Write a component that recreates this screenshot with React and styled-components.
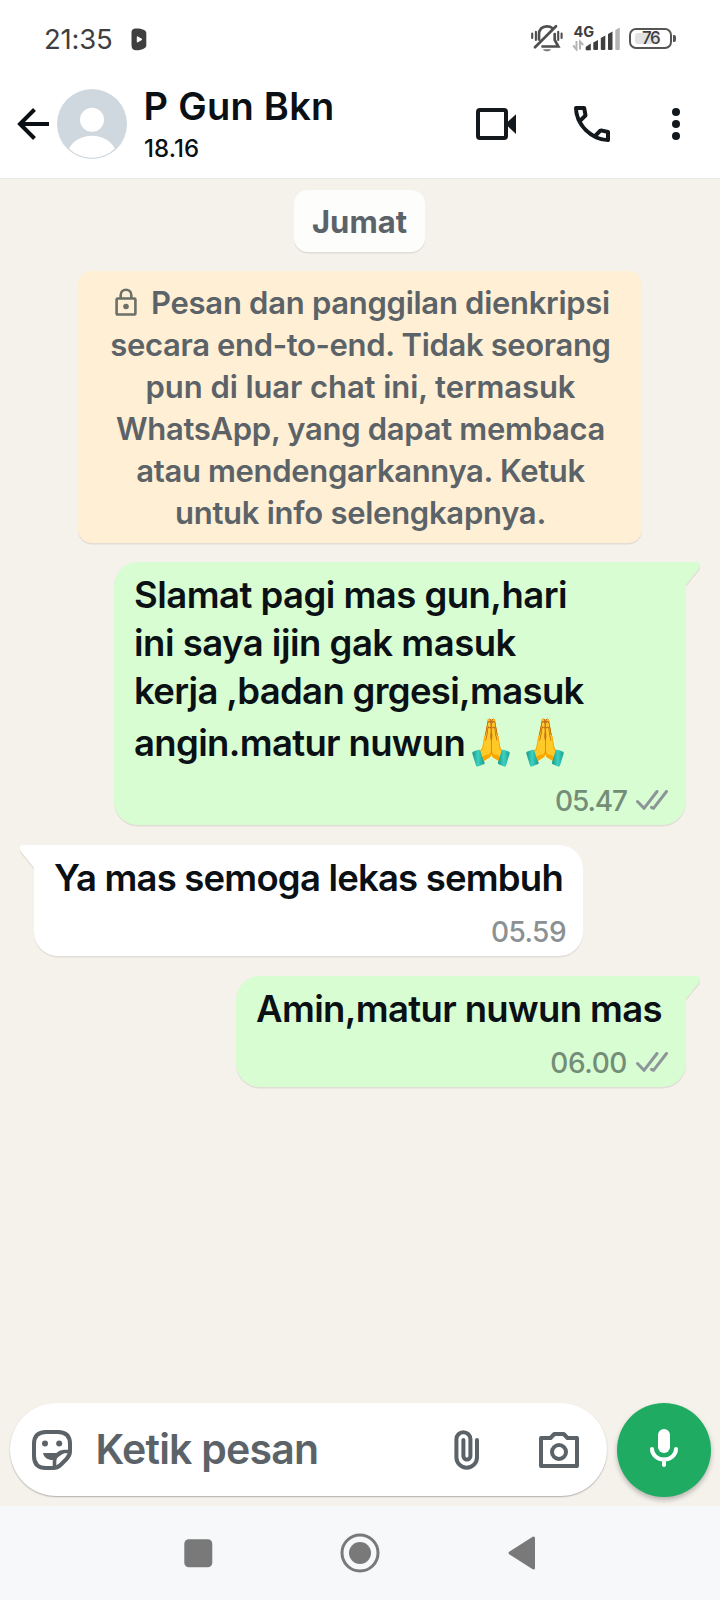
import React from "react";
import styled, { createGlobalStyle } from "styled-components";

const Global = createGlobalStyle`
  *, *::before, *::after { box-sizing: border-box; }
  body {
    margin: 0;
    background: #f5f1eb;
    font-family: Inter, "Noto Sans", sans-serif;
    color: #0a1014;
  }
  svg { display: block; flex: none; }
`;

const Screen = styled.div`
  width: 720px;
  height: 1600px;
  display: flex;
  flex-direction: column;
  overflow: hidden;
  background: #f5f1eb;
`;

const Line = styled.div`
  white-space: pre;
  letter-spacing: ${(p) => p.$ls || 0}px;
`;

/* Status bar */
const StatusBar = styled.div`
  height: 69px;
  background: #fff;
  display: flex;
  align-items: flex-start;
  padding: 24px 48px 0 44px;
  color: #3f3f3f;
`;
const Clock = styled(Line)`
  font-size: 27.5px;
  line-height: 30px;
  width: 87px;
`;
const StatusIcons = styled.div`
  margin-left: auto;
  display: flex;
  align-items: flex-start;
`;
const Signal = styled.svg`
  margin: -5px 0 0 4px;
  font-family: Inter, sans-serif;
`;
const Battery = styled.div`
  position: relative;
  width: 43px;
  height: 21px;
  margin: 4px 0 0 9px;
  border: 2px solid #555;
  border-radius: 7px;
  display: flex;
  align-items: center;
  padding: 0 4px;
  &::after {
    content: "";
    position: absolute;
    right: -6px;
    top: 5px;
    width: 3px;
    height: 7px;
    border-radius: 0 2px 2px 0;
    background: #555;
  }
`;
const Charge = styled.div`
  width: 24px;
  height: 11px;
  border-radius: 3px;
  background: #e2e2e2;
`;
const ChargeText = styled.div`
  margin-left: -17px;
  font-size: 17px;
  line-height: 17px;
  letter-spacing: -1.4px;
  font-weight: 500;
`;

/* Header */
const Header = styled.header`
  height: 110px;
  background: #fff;
  display: flex;
  align-items: center;
  padding: 0 40px 0 17px;
  border-bottom: 1px solid #e9e9e7;
`;
const Contact = styled.div`
  flex: 1;
  padding: 0 0 3px 16.5px;
`;
const ContactName = styled(Line)`
  font-size: 38px;
  font-weight: 600;
  line-height: 48px;
`;
const ContactSeen = styled(Line)`
  margin-top: 5px;
  font-size: 24px;
  font-weight: 500;
  line-height: 28px;
  padding-left: 0.5px;
`;
const Actions = styled.div`
  display: flex;
  align-items: center;
`;

/* Conversation */
const Chat = styled.main`
  flex: 1;
  display: flex;
  flex-direction: column;
  padding: 11px 34px 0;
`;
const DayChip = styled.div`
  align-self: center;
  width: 131px;
  height: 62px;
  margin-right: 1px;
  padding-top: 1px;
  border-radius: 14px;
  background: #fdfdfb;
  box-shadow: 0 1.5px 0 rgba(60, 50, 30, 0.1);
  color: #5b6368;
  font-size: 31px;
  font-weight: 700;
  line-height: 61px;
  text-align: center;
`;
const Notice = styled.div`
  align-self: center;
  width: 564px;
  margin-top: 19px;
  padding: 11px 0 9px;
  border-radius: 14px;
  background: #ffefd4;
  box-shadow: 0 1.5px 0 rgba(60, 50, 30, 0.1);
  color: #5b6368;
  font-size: 31px;
  font-weight: 600;
  line-height: 42px;
`;
const NoticeLine = styled(Line)`
  display: flex;
  justify-content: center;
  padding-left: 1px;
  svg { margin: 6px 14px 0 4px; }
`;
const Bubble = styled.article`
  position: relative;
  align-self: ${(p) => (p.$mine ? "flex-end" : "flex-start")};
  width: ${(p) => p.$w}px;
  margin-top: ${(p) => p.$gap || 20}px;
  padding: 9px 18px 7px 20px;
  border-radius: ${(p) => (p.$mine ? "24px 0 24px 24px" : "0 24px 24px 24px")};
  background: ${(p) => (p.$mine ? "#d8fdd2" : "#fff")};
  box-shadow: 0 1.5px 0 rgba(60, 50, 30, 0.1);
`;
const Tail = styled.svg`
  position: absolute;
  top: 0;
  ${(p) => (p.$mine ? "right: -14px;" : "left: -14px; transform: scaleX(-1);")}
  fill: ${(p) => (p.$mine ? "#d8fdd2" : "#fff")};
`;
const Message = styled(Line)`
  display: flex;
  font-size: 36.5px;
  font-weight: 600;
  line-height: ${(p) => p.$lh || 48}px;
`;
const Meta = styled.div`
  display: flex;
  justify-content: flex-end;
  margin: 13px ${(p) => (p.$mine ? 0 : -1)}px 0 0;
  color: ${(p) => (p.$mine ? "#748d78" : "#8b9093")};
  font-size: 28px;
  font-weight: 500;
  line-height: 34px;
  svg { margin: 6px 0 0 9px; }
`;
const Emoji = styled.span`
  position: relative;
  width: 38px;
  height: 56px;
  margin-left: ${(p) => p.$gap}px;
  font-size: 46px;
  letter-spacing: 0;
`;
const Hands = styled.span`
  display: block;
  height: 56px;
  clip-path: polygon(0 0, 38px 0, 38px 34px, 31px 36px, 27px 50px, 11px 50px, 7px 36px, 0 34px);
`;
const Glyph = styled.span`
  display: block;
  transform: translate(-9px, -2px) scaleX(0.92);
`;
const Cuffs = styled.svg`
  position: absolute;
  left: 0;
  top: 2px;
`;

/* Composer */
const Composer = styled.footer`
  display: flex;
  align-items: center;
  height: 104px;
  padding: 0 9px 10px 10px;
`;
const Field = styled.div`
  flex: 1;
  height: 93px;
  margin-right: 10px;
  border-radius: 47px;
  background: #fff;
  box-shadow: 0 1px 1.5px rgba(0, 0, 0, 0.28);
  display: flex;
  align-items: center;
  padding: 2px 28px 0 22px;
  color: #5b6368;
`;
const Placeholder = styled(Line)`
  flex: 1;
  padding: 0 0 2px 23.5px;
  font-size: 41px;
  font-weight: 600;
  line-height: 60px;
`;
const MicButton = styled.div`
  width: 94px;
  height: 94px;
  margin-top: 1px;
  border-radius: 50%;
  background: #1fab61;
  box-shadow: 0 3px 5px rgba(0, 0, 0, 0.25);
  display: flex;
  align-items: center;
  justify-content: center;
`;
const Attach = styled.div`
  margin-right: 59px;
`;

/* System navigation */
const NavBar = styled.nav`
  height: 94px;
  background: #f7f8fa;
  display: flex;
  align-items: center;
  padding-left: 184px;
`;

const PlaySvg = styled.svg`
  margin-top: 4px;
`;
const PhoneSvg = styled.svg`
  margin-left: 52px;
`;
const DotsSvg = styled.svg`
  margin-left: 56px;
`;
const MicSvg = styled.svg`
  margin-bottom: 3px;
`;
const NavSvg = styled.svg`
  margin-left: ${(p) => p.$gap}px;
`;

const Play = () => (
  <PlaySvg width="16" height="23" viewBox="0 0 16 23">
    <path d="M4 .6C9 0 15.300 1.500 15.300 5V17.500C15.300 20.500 9.500 22.500 4.500 22.200 1.500 22 .5 20 .5 17V5C.5 2 1.500 .9 4 .6Z" fill="#3f3f3f" />
    <path d="M6.300 8.700 11 11.400 6.300 14.100Z" fill="#fff" stroke="#fff" strokeLinejoin="round" />
  </PlaySvg>
);
const Bell = () => (
  <svg width="32" height="29" viewBox="0 0 32 29" fill="none" stroke="#4f4f4f" strokeWidth="2.700" strokeLinecap="round">
    <path d="M8 15.500V10.500C8 5.500 11 2.300 15.800 2.300 18 2.300 20 2.800 21.300 4.200M23.700 10V16L27.300 22.500H11.500M4 23.200 25 2.200" />
    <path d="M1.200 9.500V14M4.900 7.800V16M27.200 7.800V16M30.600 9.500V14" strokeWidth="2.100" />
    <path d="M12 25.200H20C19 28 13 28 12 25.200Z" fill="#777" stroke="none" />
  </svg>
);
const SignalBars = () => (
  <Signal width="53" height="32" viewBox="-6 -6 53 32">
    <text x="0.500" y="12" fontSize="14.500" fontWeight="700" fill="#3f3f3f">4G</text>
    <g fill="#3f3f3f">
      <path d="M13 25V22L17.500 19V25Z" stroke="#3f3f3f" strokeLinejoin="round" strokeWidth=".6" />
      <path d="M20.300 17.500 25 15V24Q25 25 24 25H21.300Q20.300 25 20.300 24Z" />
      <path d="M27.800 13 32.300 10.500V24Q32.300 25 31.300 25H28.800Q27.800 25 27.800 24Z" />
      <path d="M35 9 39.500 6.500V24Q39.500 25 38.500 25H36Q35 25 35 24Z" />
    </g>
    <path d="M42.300 5 46.800 2.500V24Q46.800 25 45.800 25H43.300Q42.300 25 42.300 24Z" fill="#b5b5b5" />
    <path d="M3.500 16V24.500L.2 20.500M7 24.500V16.500L10.200 20" fill="none" stroke="#b5b5b5" strokeWidth="2" />
  </Signal>
);
const Back = () => (
  <svg width="40" height="32" viewBox="0 0 40 32" fill="none" stroke="#0a1014" strokeWidth="4">
    <path d="M32 16H3M17.500 1.500 3 16 17.500 30.500" />
  </svg>
);
const Avatar = () => (
  <svg width="70" height="70" viewBox="0 0 70 70">
    <circle cx="35" cy="35" r="35" fill="#cfd8df" />
    <circle cx="35" cy="30.700" r="12" fill="#fff" />
    <path d="M12 59.500C16 51.500 25 46.700 35 46.700S54 51.500 57.800 59.500C52 65.500 44 68.700 35 68.700S18 65.500 12 59.500Z" fill="#fff" />
  </svg>
);
const Video = () => (
  <svg width="40" height="32" viewBox="0 0 40 32">
    <rect x="2" y="2" width="28" height="28" rx="2" fill="none" stroke="#12181c" strokeWidth="4" />
    <path d="M31.500 14 40 6.200V26L31.500 18Z" fill="#12181c" />
  </svg>
);
const Phone = () => (
  <PhoneSvg width="48" height="48" viewBox="0 -960 960 960" fill="#12181c">
    <path d="M798-120q-125 0-247-54.500T329-329Q229-429 174.500-551T120-798q0-18 12-30t30-12h162q14 0 25 9.500t13 22.500l26 140q2 16-1 27t-11 19l-97 98q20 37 47.500 71.500T387-386q31 31 65 57.500t72 48.500l94-94q9-9 23.500-13.500T670-390l138 28q14 4 23 14.500t9 23.500v162q0 18-12 30t-30 12ZM241-600l66-66-17-94h-89q5 41 14 81t26 79Zm358 358q39 17 79.500 27t81.500 13v-88l-94-19-67 67Z" />
  </PhoneSvg>
);
const Dots = () => (
  <DotsSvg width="8" height="32" viewBox="0 0 8 32" fill="#12181c">
    <circle cx="4" cy="4" r="4" />
    <circle cx="4" cy="16" r="4" />
    <circle cx="4" cy="28" r="4" />
  </DotsSvg>
);
const Lock = () => (
  <svg width="22" height="28" viewBox="0 0 22 28" fill="none" stroke="#6b7068" strokeWidth="2.600">
    <rect x="1.600" y="10.500" width="18.800" height="16" rx="1" />
    <path d="M5.700 10.500V7A5.300 5.300 0 0 1 16.300 7V10.500" />
    <circle cx="11" cy="18.500" r="2.800" fill="#6b7068" stroke="none" />
  </svg>
);
const Checks = () => (
  <svg width="32" height="20" viewBox="0 0 32 20" fill="none" stroke="#8e9598" strokeWidth="3" strokeLinecap="round" strokeLinejoin="round">
    <path d="M1.500 11.500 8 18.300 21 1.500M15.500 17.300 17.500 18.300 30.500 1.500" />
  </svg>
);
const BubbleTail = ({ mine }) => (
  <Tail $mine={mine} width="14" height="25" viewBox="0 0 14 25">
    <path d="M0 1.500H10.500Q15 2.500 13.500 8L0 24.500Z" fill="#3c321e" fillOpacity=".1" />
    <path d="M0 0H11Q14 0 14 3 14 5.500 12.500 7.300L0 22.800Z" />
  </Tail>
);
const Pray = ({ gap }) => (
  <Emoji $gap={gap}>
    <Hands>
      <Glyph>🙏</Glyph>
    </Hands>
    <Cuffs width="38" height="50" viewBox="0 0 38 50">
      <defs>
        <linearGradient id="cuff" x1="0" x2="1">
          <stop offset="0" stopColor="#159a8c" />
          <stop offset=".5" stopColor="#3fd0bf" />
          <stop offset="1" stopColor="#17a090" />
        </linearGradient>
      </defs>
      <path d="M.3 36.500Q0 35 2 34.300L6.500 32.700Q8 32.500 8.500 34L12 45.500Q12.200 47 10.700 47.500L6 49.500Q4.500 50 4 48.500Z" fill="url(#cuff)" />
      <path d="M37.700 36.500Q38 35 36 34.300L31.500 32.700Q30 32.500 29.500 34L26 45.500Q25.800 47 27.300 47.500L32 49.500Q33.500 50 34 48.500Z" fill="url(#cuff)" />
    </Cuffs>
  </Emoji>
);
const Sticker = () => (
  <svg width="40" height="40" viewBox="0 0 40 40" fill="none" stroke="#5b6368" strokeWidth="4">
    <path d="M14 2H26Q38 2 38 14V21C38 25 36.500 27 34.500 29L28.500 35C26.500 37 24.500 38 21 38H14Q2 38 2 26V14Q2 2 14 2Z" />
    <path d="M38 21.500H32C26.500 22 22.700 26 22.500 31V38" strokeWidth="3.600" />
    <path d="M11 23H32L22 30C16.500 30.500 12 28 11 23Z" fill="#5b6368" stroke="none" />
    <circle cx="13" cy="13.500" r="3" fill="#5b6368" stroke="none" />
    <circle cx="27.200" cy="13.500" r="3" fill="#5b6368" stroke="none" />
  </svg>
);
const Clip = () => (
  <svg width="26" height="40" viewBox="0 0 26 40" fill="none" stroke="#5b6368" strokeWidth="4" strokeLinecap="round">
    <path d="M23 10V27.300A10.300 10.500 0 0 1 2.400 27.300V9.200A7 7 0 0 1 16.400 9.200V26A3.500 3.500 0 0 1 9.400 26V10" />
  </svg>
);
const Camera = () => (
  <svg width="40" height="36" viewBox="0 0 40 36" fill="none" stroke="#5b6368" strokeWidth="4" strokeLinejoin="round">
    <path d="M2 6H11.500L15.300 2H24.700L28.500 6H38V34H2Z" />
    <circle cx="20" cy="20" r="7" />
  </svg>
);
const Mic = () => (
  <MicSvg width="28" height="38" viewBox="0 0 28 38" fill="none" stroke="#fff" strokeWidth="4" strokeLinecap="round">
    <rect x="8" y="0" width="12" height="24" rx="6" fill="#fff" stroke="none" />
    <path d="M2 20A12 10.500 0 0 0 26 20M14 31V36" />
  </MicSvg>
);
const Recents = () => (
  <svg width="29" height="29" viewBox="0 0 29 29">
    <rect x=".3" y=".3" width="28" height="28" rx="4.500" fill="#797979" />
  </svg>
);
const Home = () => (
  <NavSvg $gap={127} width="40" height="40" viewBox="0 0 40 40">
    <circle cx="20" cy="20" r="18" fill="none" stroke="#797979" strokeWidth="3" />
    <circle cx="20" cy="20" r="11" fill="#797979" />
  </NavSvg>
);
const BackNav = () => (
  <NavSvg $gap={128} width="28" height="34" viewBox="0 0 28 34">
    <path d="M2 17 25.500 2V32Z" fill="#797979" stroke="#797979" strokeWidth="3" strokeLinejoin="round" />
  </NavSvg>
);

const notice = [
  ["secara end-to-end. Tidak seorang", -0.35],
  ["pun di luar chat ini, termasuk", -0.08],
  ["WhatsApp, yang dapat membaca", -0.3],
  ["atau mendengarkannya. Ketuk", -0.33],
  ["untuk info selengkapnya.", -0.27],
];

export default function App() {
  return (
    <Screen>
      <Global />
      <StatusBar>
        <Clock $ls={-0.22}>21:35</Clock>
        <Play />
        <StatusIcons>
          <Bell />
          <SignalBars />
          <Battery>
            <Charge />
            <ChargeText>76</ChargeText>
          </Battery>
        </StatusIcons>
      </StatusBar>
      <Header>
        <Back />
        <Avatar />
        <Contact>
          <ContactName $ls={0.28}>P Gun Bkn</ContactName>
          <ContactSeen $ls={0.1}>18.16</ContactSeen>
        </Contact>
        <Actions>
          <Video />
          <Phone />
          <Dots />
        </Actions>
      </Header>
      <Chat>
        <DayChip>Jumat</DayChip>
        <Notice>
          <NoticeLine $ls={-0.28}>
            <Lock />
            Pesan dan panggilan dienkripsi
          </NoticeLine>
          {notice.map(([text, ls]) => (
            <NoticeLine key={text} $ls={ls}>{text}</NoticeLine>
          ))}
        </Notice>
        <Bubble $mine $w={572} $gap={19}>
          <BubbleTail mine />
          <Message $ls={-0.53}>Slamat pagi mas gun,hari</Message>
          <Message $ls={-0.5}>ini saya ijin gak masuk</Message>
          <Message $ls={-0.67}>kerja ,badan grgesi,masuk</Message>
          <Message $ls={-0.66} $lh={56}>
            angin.matur nuwun
            <Pray gap={7} />
            <Pray gap={16} />
          </Message>
          <Meta $mine>
            <Line $ls={-1.1}>05.47</Line>
            <Checks />
          </Meta>
        </Bubble>
        <Bubble $w={549}>
          <BubbleTail />
          <Message $ls={-0.8}>Ya mas semoga lekas sembuh</Message>
          <Meta>
            <Line $ls={-0.54}>05.59</Line>
          </Meta>
        </Bubble>
        <Bubble $mine $w={450}>
          <BubbleTail mine />
          <Message $ls={-0.64}>Amin,matur nuwun mas</Message>
          <Meta $mine>
            <Line $ls={-0.41}>06.00</Line>
            <Checks />
          </Meta>
        </Bubble>
      </Chat>
      <Composer>
        <Field>
          <Sticker />
          <Placeholder $ls={-0.76}>Ketik pesan</Placeholder>
          <Attach><Clip /></Attach>
          <Camera />
        </Field>
        <MicButton><Mic /></MicButton>
      </Composer>
      <NavBar>
        <Recents />
        <Home />
        <BackNav />
      </NavBar>
    </Screen>
  );
}
